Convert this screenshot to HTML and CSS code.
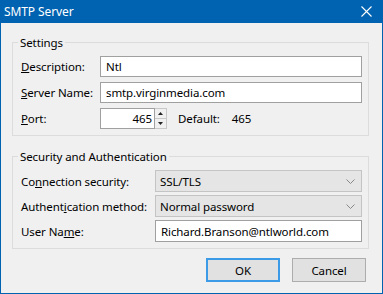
FILE: index.html
```html
<!DOCTYPE html>
<html lang="en">
<head>
    <meta charset="UTF-8">
    <title>SMTP Server</title>
    <link rel="stylesheet" href="styles.css">
</head>
<body>
    <div class="window">
        <div class="titlebar">
            <span class="title">SMTP Server</span>
            <svg class="close" width="11" height="11" viewBox="0 0 11 11">
                <path d="M0.5 0.5 L10.5 10.5 M10.5 0.5 L0.5 10.5" stroke="#fff" stroke-width="1.1" fill="none"/>
            </svg>
        </div>

        <div class="content">
            <div class="group">
                <div class="group-title">Settings</div>
                <div class="rows settings-rows">
                    <label><u>D</u>escription:</label>
                    <input class="textbox" type="text" value="Ntl">
                    <label><u>S</u>erver Name:</label>
                    <input class="textbox" type="text" value="smtp.virginmedia.com">
                    <label><u>P</u>ort:</label>
                    <div class="port-row">
                        <input class="textbox port" type="text" value="465">
                        <div class="spinner">
                            <div class="spin-btn"><svg width="5" height="3" viewBox="0 0 5 3"><path d="M2.5 0 L5 3 L0 3 Z" fill="#222"/></svg></div>
                            <div class="spin-btn"><svg width="5" height="3" viewBox="0 0 5 3"><path d="M0 0 L5 0 L2.5 3 Z" fill="#222"/></svg></div>
                        </div>
                        <span class="default-label">Default:</span>
                        <span class="default-value">465</span>
                    </div>
                </div>
            </div>

            <div class="group">
                <div class="group-title">Security and Authentication</div>
                <div class="rows security-rows">
                    <label>Co<u>n</u>nection security:</label>
                    <div class="combo">
                        <span>SSL/TLS</span>
                        <svg width="9" height="5" viewBox="0 0 9 5"><path d="M0.5 0.5 L4.5 4.5 L8.5 0.5" stroke="#888" fill="none"/></svg>
                    </div>
                    <label>Authent<u>i</u>cation method:</label>
                    <div class="combo">
                        <span>Normal password</span>
                        <svg width="9" height="5" viewBox="0 0 9 5"><path d="M0.5 0.5 L4.5 4.5 L8.5 0.5" stroke="#888" fill="none"/></svg>
                    </div>
                    <label>User Na<u>m</u>e:</label>
                    <input class="textbox" type="text" value="Richard.Branson@ntlworld.com">
                </div>
            </div>

            <div class="buttons">
                <button class="btn btn-default">OK</button>
                <button class="btn">Cancel</button>
            </div>
        </div>
    </div>
</body>
</html>
```

FILE: styles.css
```css
body {
    margin: 0;
    font-family: "Noto Sans", sans-serif;
    font-size: 11.5px;
    letter-spacing: -0.1px;
    color: #000;
    background-color: #f0f0f0;
}

.window {
    width: 383px;
    height: 294px;
    box-sizing: border-box;
    border: 1px solid #0063b1;
    border-top: none;
    background-color: #f0f0f0;
}

.titlebar {
    height: 23px;
    margin: 0 -1px;
    background-color: #0063b1;
    color: #fff;
    display: flex;
    align-items: center;
    justify-content: space-between;
    padding: 0 11px 0 4px;
}

.title {
    font-size: 12px;
}

.content {
    padding: 19px 13px 0 11px;
}

.group {
    border: 1px solid #dcdcdc;
    padding: 0 6px 6px 8px;
    margin-bottom: 20px;
}

.group + .group {
    margin-bottom: 9px;
}

.group-title {
    width: fit-content;
    margin: -8px 0 0 -3px;
    padding: 0 2px;
    line-height: 15px;
    background-color: #f0f0f0;
}

.rows {
    display: grid;
    align-items: center;
}

.settings-rows {
    grid-template-columns: 79px 1fr;
    row-gap: 5px;
    margin-top: 6px;
}

.security-rows {
    grid-template-columns: 134px 1fr;
    row-gap: 3px;
    margin-top: 6px;
}

label {
    white-space: nowrap;
}

.textbox {
    box-sizing: border-box;
    height: 21px;
    width: 100%;
    margin: 0;
    padding: 0 5px;
    border: 1px solid #a0a0a0;
    background-color: #fff;
    font: inherit;
    letter-spacing: inherit;
    color: #000;
}

.security-rows .textbox {
    height: 22px;
}

.port-row {
    display: flex;
    align-items: center;
}

.textbox.port {
    width: 55px;
    text-align: right;
    padding-right: 2px;
}

.spinner {
    display: flex;
    flex-direction: column;
    width: 12px;
    height: 21px;
    box-sizing: border-box;
}

.spin-btn {
    flex: 1;
    display: flex;
    align-items: center;
    justify-content: center;
    background-color: #f0f0f0;
    border: 1px solid #c8c8c8;
    border-left: none;
}

.spin-btn + .spin-btn {
    border-top: none;
}

.default-label {
    margin-left: 11px;
}

.default-value {
    margin-left: 12px;
}

.combo {
    box-sizing: border-box;
    height: 22px;
    display: flex;
    align-items: center;
    justify-content: space-between;
    padding: 0 6px 0 4px;
    background-color: #e5e5e5;
    border: 1px solid #c4c4c4;
}

.buttons {
    display: flex;
    justify-content: flex-end;
    gap: 12px;
    padding-right: 3px;
}

.btn {
    width: 74px;
    height: 24px;
    box-sizing: border-box;
    font: inherit;
    letter-spacing: inherit;
    color: #000;
    background-color: #e1e1e1;
    border: 1px solid #adadad;
    padding: 0;
}

.btn-default {
    border: 2px solid #3c9be6;
}
```
